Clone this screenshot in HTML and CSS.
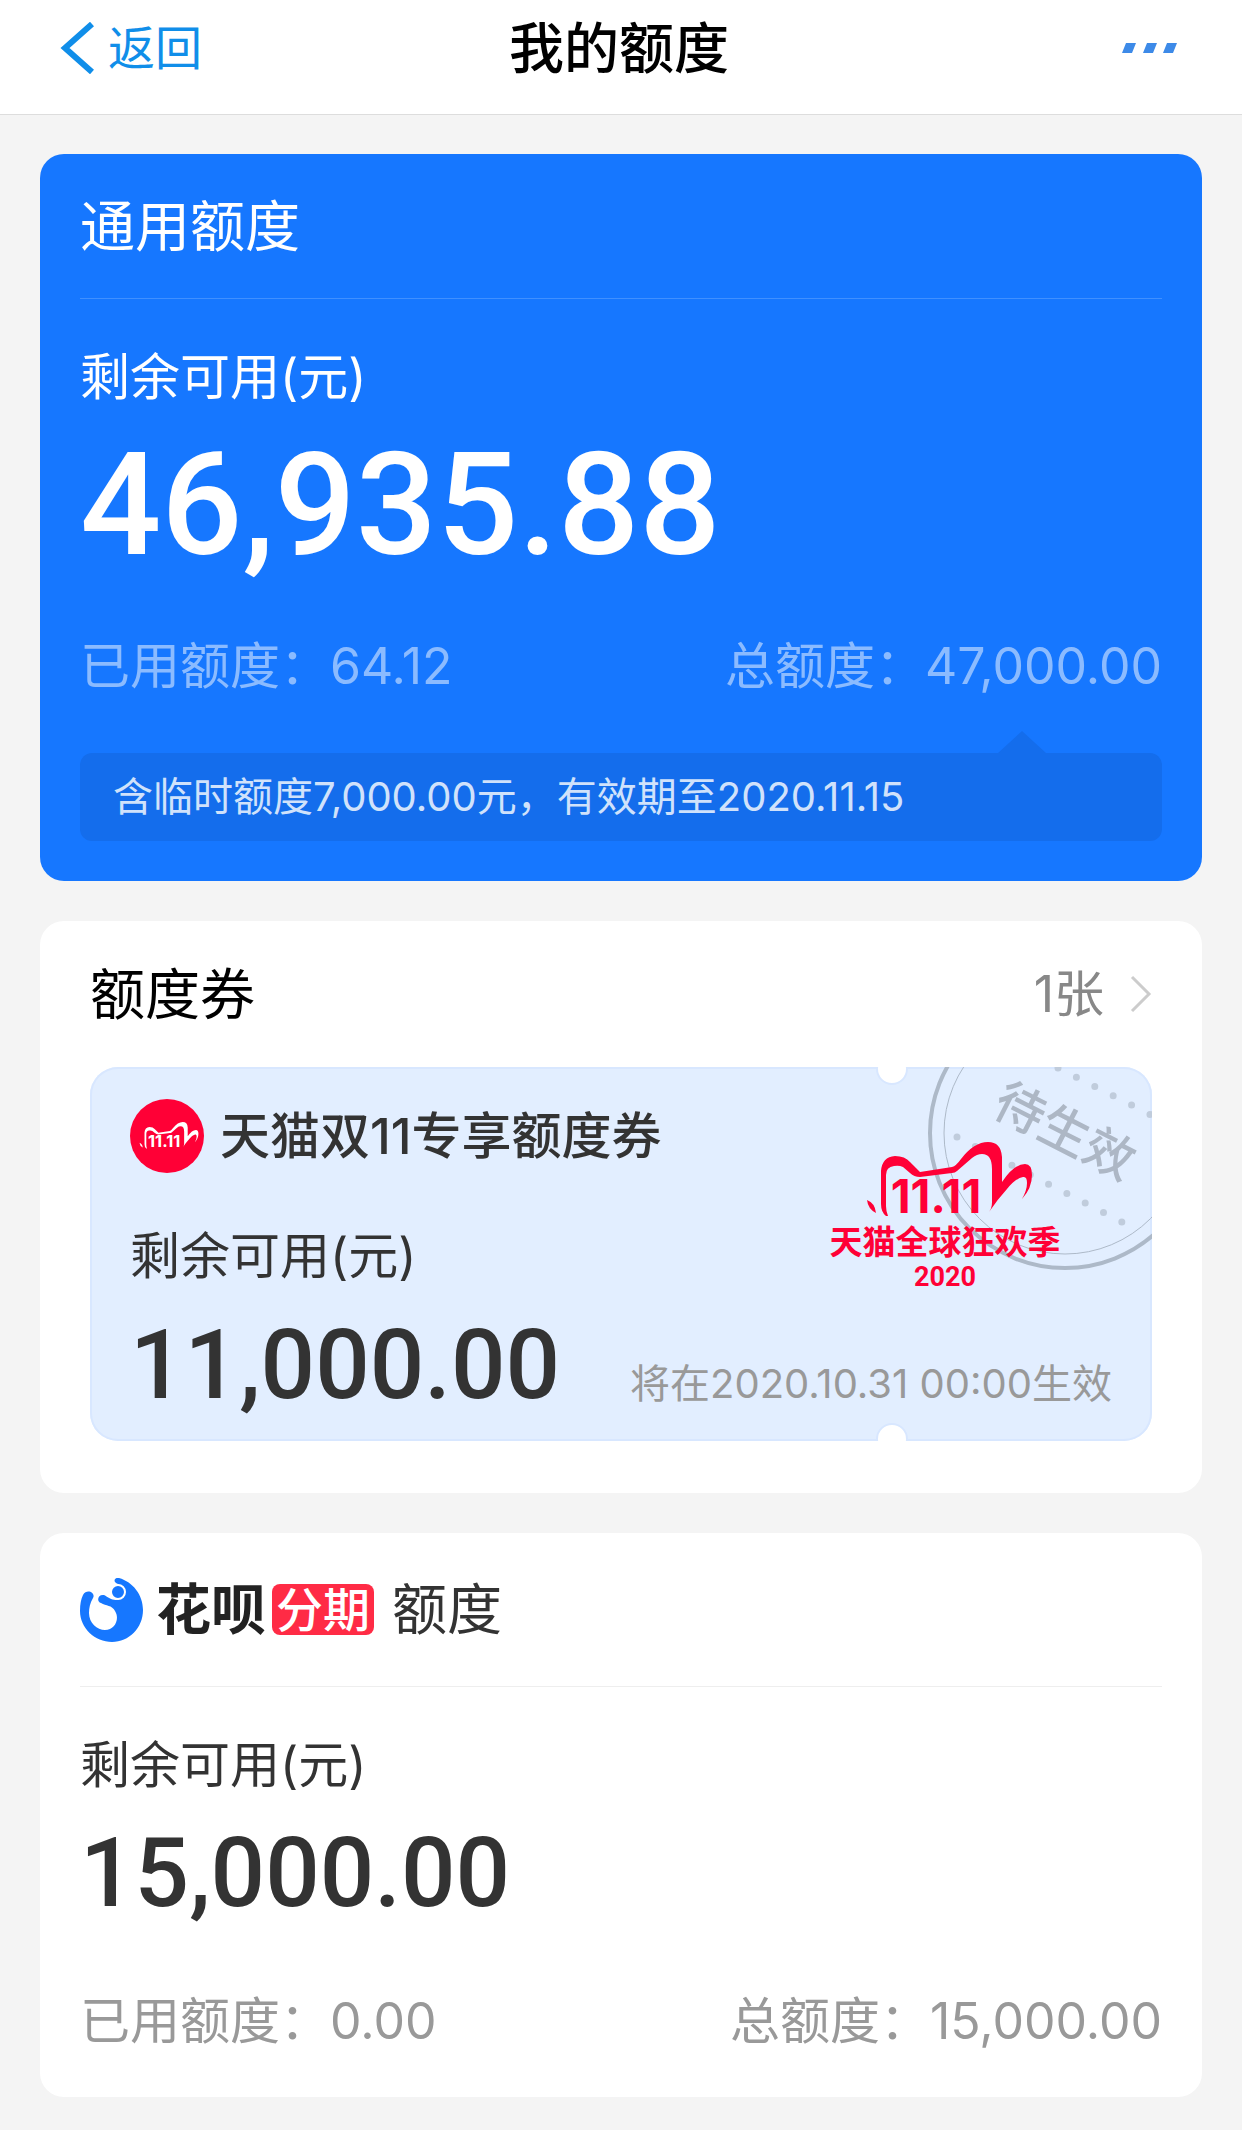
FILE: index.html
```html
<!DOCTYPE html>
<html lang="zh-CN">

<head>
    <title>我的额度</title>
    <meta charset="UTF-8">
    <meta name="viewport" content="width=device-width, initial-scale=1.0">
    <link rel="stylesheet" href="styles.css">
</head>

<body>
    <header class="navbar">
        <a class="back" href="#">
            <svg width="36" height="52" viewBox="0 0 36 52"><path d="M32 2 5 26l27 24" /></svg>
            返回
        </a>
        <h1>我的额度</h1>
        <button class="more" type="button" aria-label="更多">
            <svg width="56" height="10" viewBox="0 0 56 10"><path d="M4 0h10l-4 10H0zM25 0h10l-4 10H21zM45 0h10l-4 10H41z" /></svg>
        </button>
    </header>

    <main>
        <section class="card general">
            <h2 class="card-head">通用额度</h2>
            <div class="label">剩余可用(元)</div>
            <div class="amount big">46,935.88</div>
            <div class="row">
                <span>已用额度：64.12</span>
                <span>总额度：47,000.00</span>
            </div>
            <p class="tip">含临时额度7,000.00元，有效期至2020.11.15</p>
        </section>

        <section class="card coupons">
            <div class="coupons-head">
                <h2>额度券</h2>
                <a href="#">1张
                    <svg width="22" height="38" viewBox="0 0 22 38"><path d="m2 2 17 17L2 36" /></svg>
                </a>
            </div>
            <div class="coupon">
                <svg class="coupon-art" width="332" height="260" viewBox="820 1068 332 260">
                    <g class="stamp">
                        <circle cx="1065" cy="1134" r="135" stroke-width="4" />
                        <circle cx="1065" cy="1134" r="121" stroke-width="1" />
                        <path class="dots" d="M1058 1069 1169 1125M957 1138 1122 1223" />
                        <text x="1065" y="1150" transform="rotate(27 1065 1132)">待生效</text>
                    </g>
                    <g class="logo">
                        <g id="cat">
                            <path d="M867 1201q8 3 9 13-8-4-9-13z" />
                            <path d="M886 1217q-5-4-5-12v-33q1-14 14-15 10 0 15 6l10 10 32-5q4-1 9-8 13-17 27-17 13 0 14 15v25q12-18 23-18 7 0 7 11 0 13-10 24 5-9 5-16 0-7-4-6-7 1-16 12-10 11-18 23 3-4 3-10v-33q0-15-10-15-5 0-10 4l-15 13q-2 2-5 2l-32 4q-6 0-10-4l-7-6q-4-2-9-1-8 1-8 9v31q0 5 2 10z" />
                            <text class="n1111" x="936" y="1214">11.11</text>
                        </g>
                        <text class="festival" x="945" y="1255">天猫全球狂欢季</text>
                        <text class="year" x="945" y="1287">2020</text>
                    </g>
                </svg>
                <h3 class="coupon-title">
                    <svg width="74" height="74" viewBox="0 0 74 74">
                        <circle cx="37" cy="37" r="37" />
                        <use href="#cat" transform="translate(-300 -385) scale(.357)" />
                    </svg>
                    天猫双11专享额度券
                </h3>
                <div class="label">剩余可用(元)</div>
                <div class="coupon-foot">
                    <div class="amount">11,000.00</div>
                    <span>将在2020.10.31 00:00生效</span>
                </div>
            </div>
        </section>

        <section class="card huabei">
            <h2 class="card-head">
                <svg width="64" height="64" viewBox="0 0 64 64">
                    <path d="M36 5C33 3 35-1 39 0c14 4 24 17 24 32 0 18-14 32-31 32S0 50 0 33c0-7 1-12 3-16 4-7 13-2 10 3-3 5-4 10-4 15 0 10 8 17 16 17 10 0 15-11 10-19-3-6-9-5-14-8-5-2-3-9 3-8 4 2 7 5 12 5 6-1 10-4 9-10-1-3-5-5-9-7z" />
                    <circle cx="38" cy="14" r="7" />
                </svg>
                <b>花呗</b>
                <em>分期</em>
                额度
            </h2>
            <div class="label">剩余可用(元)</div>
            <div class="amount">15,000.00</div>
            <div class="row">
                <span>已用额度：0.00</span>
                <span>总额度：15,000.00</span>
            </div>
        </section>
    </main>
</body>

</html>
```
FILE: styles.css
```css
* {
    box-sizing: border-box;
}

body {
    margin: 0;
    background-color: #f4f4f4;
    color: #333;
    font-family: Inter, "Noto Sans CJK SC", sans-serif;
    line-height: 1.4;
}

h1,
h2,
h3,
p {
    margin: 0;
    font-weight: 400;
}

a {
    text-decoration: none;
}

svg {
    display: block;
    flex: none;
}

.navbar {
    display: grid;
    grid-template-columns: 1fr auto 1fr;
    align-items: center;
    height: 115px;
    padding: 0 64px 18px 60px;
    background-color: #fff;
    border-bottom: 1px solid #ddd;
}

.navbar h1 {
    color: #000;
    font-size: 55px;
    font-weight: 500;
}

.back {
    display: flex;
    align-items: center;
    gap: 12px;
    color: #108ee9;
    font-size: 47px;
}

.back path {
    fill: none;
    stroke: #108ee9;
    stroke-width: 6;
}

.more {
    justify-self: end;
    padding: 0;
    border: 0;
    background: none;
}

.more path {
    fill: #3d8ae8;
}

main {
    display: flex;
    flex-direction: column;
    gap: 40px;
    padding: 39px 40px 32px;
}

.card {
    padding: 0 40px;
    background-color: #fff;
    border-radius: 24px;
}

.card-head {
    display: flex;
    align-items: center;
    height: 145px;
    border-bottom: 1px solid #eee;
    font-size: 55px;
}

.label {
    font-size: 50px;
    line-height: 70px;
}

.amount {
    font-family: Roboto, sans-serif;
    font-size: 96px;
    font-weight: 500;
    line-height: 120px;
}

.big {
    font-size: 143px;
    line-height: 160px;
}

.row {
    display: flex;
    justify-content: space-between;
    color: #999;
    font-size: 50px;
    line-height: 70px;
}

.card > .label {
    margin-top: 43px;
}

.card > .amount {
    margin-top: 13px;
}

/* general quota */
.general {
    padding-bottom: 40px;
    background-color: #1677ff;
    color: #fff;
}

.general .card-head {
    border-color: #4090ff;
}

.general .row {
    margin-top: 46px;
    color: #8bbbff;
}

.tip {
    position: relative;
    margin-top: 52px;
    padding: 0 33px;
    background-color: #146dec;
    border-radius: 12px;
    color: #d0e2fb;
    font-size: 40px;
    line-height: 88px;
}

.tip::before {
    content: "";
    position: absolute;
    right: 116px;
    bottom: 100%;
    border: 24px solid transparent;
    border-top: 0;
    border-bottom: 22px solid #146dec;
}

/* coupons */
.coupons {
    padding: 0 50px 52px;
}

.coupons-head {
    display: flex;
    align-items: center;
    justify-content: space-between;
    height: 146px;
}

.coupons-head h2 {
    color: #000;
    font-size: 55px;
}

.coupons-head a {
    display: flex;
    align-items: center;
    gap: 26px;
    color: #888;
    font-size: 50px;
}

.coupons-head path {
    fill: none;
    stroke: #ccc;
    stroke-width: 3;
}

.coupon {
    position: relative;
    overflow: hidden;
    padding: 32px 40px 16px;
    background-color: #e2eeff;
    border-radius: 28px;
    box-shadow: inset 0 0 0 2px #d8e7ff;
}

/* punched holes on the ticket edge */
.coupon::before,
.coupon::after {
    content: "";
    position: absolute;
    right: 244px;
    width: 28px;
    height: 28px;
    background-color: #fff;
    border: 2px solid #d8e7ff;
    border-radius: 50%;
}

.coupon::before {
    top: -14px;
}

.coupon::after {
    bottom: -14px;
}

.coupon-art {
    position: absolute;
    top: 0;
    right: 0;
}

.stamp circle {
    fill: none;
    stroke: #adb9c8;
}

.stamp .dots {
    fill: none;
    stroke: #c0ccdc;
    stroke-width: 7;
    stroke-linecap: round;
    stroke-dasharray: 0 20.6;
}

.stamp text {
    fill: #adb7c5;
    font-size: 50px;
    font-weight: 500;
    text-anchor: middle;
}

.logo {
    fill: #ff0036;
}

.logo text {
    font-weight: 700;
    text-anchor: middle;
}

.n1111 {
    font-size: 46px;
}

.festival {
    font-size: 33px;
}

.year {
    font-family: Roboto, sans-serif;
    font-size: 27px;
}

.coupon-title {
    display: flex;
    align-items: center;
    gap: 16px;
    font-size: 50px;
    font-weight: 500;
    line-height: 74px;
}

.coupon-title circle {
    fill: #ff0036;
}

.coupon-title use {
    fill: #fff;
}

.coupon .label {
    margin-top: 48px;
}

.coupon-foot {
    display: flex;
    align-items: baseline;
    justify-content: space-between;
    margin-top: 14px;
}

.coupon-foot span {
    color: #999;
    font-size: 40px;
}

/* huabei */
.huabei {
    padding-bottom: 41px;
}

.huabei .card-head {
    height: 154px;
}

.huabei .card-head path,
.huabei .card-head circle {
    fill: #1677ff;
}

.huabei .card-head circle {
    stroke: #fff;
    stroke-width: 2;
}

.huabei b {
    margin-left: 12px;
    color: #222;
    font-weight: 700;
}

.huabei em {
    margin: 0 18px 0 6px;
    padding: 0 4px;
    background-color: #ff2b45;
    border-radius: 8px;
    color: #fff;
    font-size: 47px;
    font-style: normal;
    font-weight: 500;
    line-height: 51px;
}

.huabei .row {
    margin-top: 53px;
}
```
